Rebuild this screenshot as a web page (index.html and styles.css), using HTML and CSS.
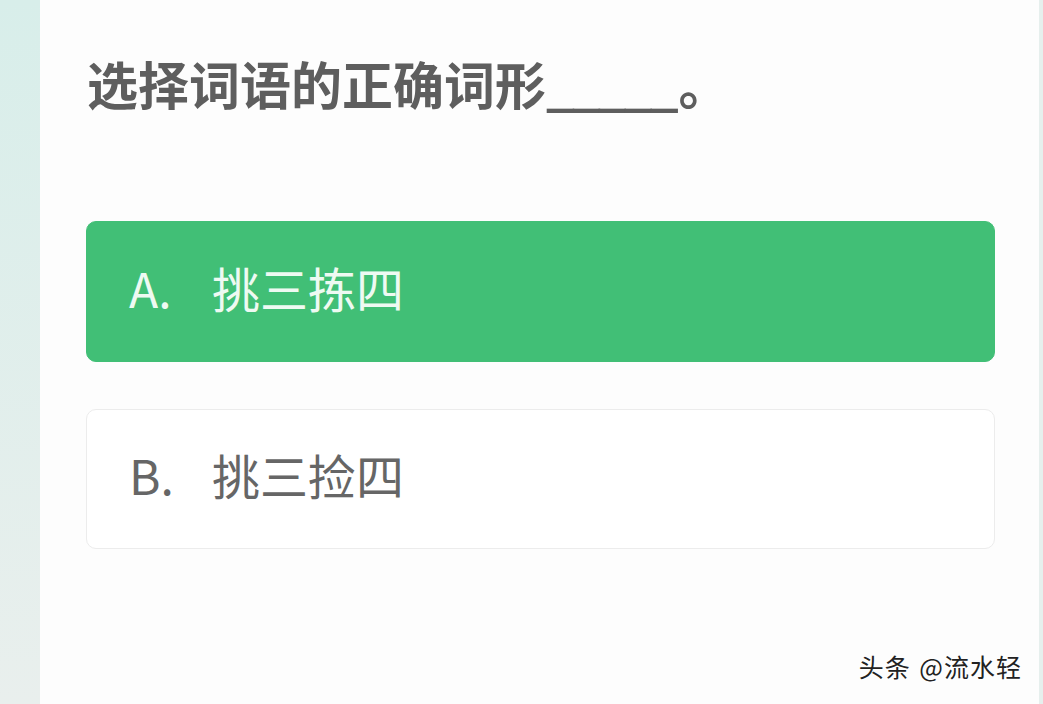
FILE: index.html
```html
<!DOCTYPE html>
<html lang="zh-CN">
<head>
  <meta charset="UTF-8">
  <meta name="viewport" content="width=device-width, initial-scale=1.0">
  <title>选择词语的正确词形</title>
  <link rel="stylesheet" href="styles.css">
</head>
<body>

  <div class="side"></div>

  <div class="card">
    <h1 class="question">选择词语的正确词形<span class="blank">_____</span>。</h1>

    <div class="option selected">
      <span class="letter">A.</span>
      <span>挑三拣四</span>
    </div>

    <div class="option">
      <span class="letter">B.</span>
      <span>挑三捡四</span>
    </div>

    <div class="mark">头条 @流水轻</div>
  </div>

  <div class="edge"></div>

</body>
</html>
```

FILE: styles.css
```css
html, body {
  height: 100%;
}
body {
  margin: 0;
  display: flex;
  font-family: "Noto Sans CJK SC", "Noto Sans", sans-serif;
  background: #fdfdfd;
  overflow: hidden;
}
.side {
  width: 40px;
  background: linear-gradient(to bottom, #d8eeea, #e9efed);
}
.edge {
  width: 4px;
  background: #e6efed;
}
.card {
  flex: 1;
  position: relative;
  background: #fdfdfd;
  padding: 55px 44px 0 46px;
}
.question {
  margin: 0;
  font-size: 51px;
  line-height: 56px;
  font-weight: bold;
  color: #5e5e5e;
  padding-left: 1px;
}
.blank {
  letter-spacing: -3px;
  margin-right: 3px;
}
.option {
  display: flex;
  align-items: center;
  box-sizing: border-box;
  height: 140px;
  margin-top: 47px;
  padding: 0 0 10px 42px;
  border: 1px solid #ececec;
  border-radius: 10px;
  background: #ffffff;
  font-size: 48px;
  color: #666666;
}
.option.selected {
  height: 141px;
  margin-top: 110px;
  border-color: #41bf76;
  background: #41bf76;
  color: #eefaf2;
}
.letter {
  width: 83px;
}
.mark {
  position: absolute;
  right: 17px;
  bottom: 20px;
  font-size: 25px;
  letter-spacing: 1px;
  word-spacing: 2px;
  color: #222222;
  text-shadow: 1px 1px 0 #ffffff, -1px 0 0 #ffffff;
}
```
